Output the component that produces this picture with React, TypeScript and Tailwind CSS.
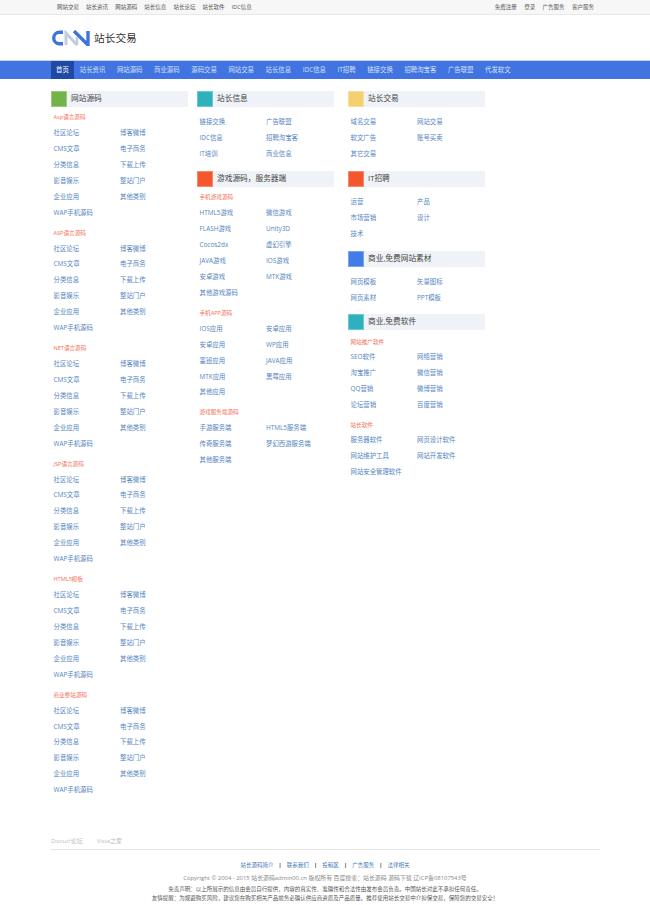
const FONT = "font-['Open_Sans','Noto_Sans_CJK_SC',sans-serif]";

const topLeft = ["网站交易", "站长资讯", "网站源码", "站长信息", "站长论坛", "站长软件", "IDC信息"];
const topRight = ["免费注册", "登录", "广告服务", "客户服务"];
const navItems = ["站长资讯", "网站源码", "商业源码", "源码交易", "网站交易", "站长信息", "IDC信息", "IT招聘", "链接交换", "招聘淘宝客", "广告联盟", "代发软文"];
const sourceLinks = ["社区论坛", "博客微博", "CMS文章", "电子商务", "分类信息", "下载上传", "影音娱乐", "整站门户", "企业应用", "其他类别", "WAP手机源码"];
const sourceGroups = ["Asp语言源码", "ASP语言源码", "NET语言源码", "JSP语言源码", "HTML5模板", "商业整站源码"];

function Links({ items, className = "" }: { items: string[]; className?: string }) {
  return (
    <div className={`grid grid-cols-[66.5px_70px] pl-[2.5px] ${className}`}>
      {items.map((t, i) => (
        <a key={i} className="h-[15.95px] leading-[17.6px] text-[6.4px] text-[#5585c0] whitespace-nowrap">
          {t}
        </a>
      ))}
    </div>
  );
}

function GroupTitle({ children, className = "" }: { children: string; className?: string }) {
  return <div className={`h-[12px] leading-[12px] pl-[2.5px] text-[5.6px] text-[#f4705a] ${className}`}>{children}</div>;
}

function Head({ color, title }: { color: string; title: string }) {
  return (
    <div className="flex h-[16px] items-center bg-[#eff2f6]">
      <span className={`h-[16px] w-[16px] border border-white/30 ${color}`} />
      <span className="ml-[4px] text-[7.7px] text-[#444]">{title}</span>
    </div>
  );
}

function Logo() {
  return (
    <svg width="39" height="16" viewBox="0 0 39 16" aria-hidden>
      <path d="M11 2.2 H7.5 A5.8 5.8 0 0 0 7.5 13.8 H11" fill="none" stroke="#3f74dc" strokeWidth="3.4" />
      <path d="M14 15 V3 L25 15" fill="none" stroke="#c2cdd9" strokeWidth="3" />
      <path d="M22 1 L36 15 V1" fill="none" stroke="#3f74dc" strokeWidth="3.4" />
      <path d="M25 15 V7" fill="none" stroke="#c2cdd9" strokeWidth="2.6" />
    </svg>
  );
}

export default function App() {
  return (
    <div className={`w-[650px] h-[905px] overflow-hidden bg-white ${FONT}`}>
      <div className="h-[15px] bg-[#f7f7f7] border-b border-[#e8e8e8]">
        <div className="flex justify-between pl-[57px] pr-[56px] text-[5.5px] leading-[14px] text-[#555]">
          <div className="flex gap-[7.1px]">
            {topLeft.map((t) => <a key={t}>{t}</a>)}
          </div>
          <div className="flex gap-[7.4px]">
            {topRight.map((t) => <a key={t}>{t}</a>)}
          </div>
        </div>
      </div>

      <div className="flex h-[45px] items-center gap-[3px] pl-[52px] pt-[1px]">
        <Logo />
        <span className="text-[10.7px] text-[#333] font-['Noto_Sans_CJK_SC',sans-serif]">站长交易</span>
      </div>

      <div className="h-[19px] bg-[#4174e0] border-t border-[#c3d0f2]">
        <div className="flex pl-[51px] text-[6.4px] leading-[18px] text-[#d5e0f8]">
          <a className="bg-[#1e4aa6] px-[5px] text-white">首页</a>
          <div className="flex gap-[11.6px] pl-[6px]">
            {navItems.map((t) => <a key={t}>{t}</a>)}
          </div>
        </div>
      </div>

      <div className="flex pl-[51px] pt-[12px] h-[757px]">
        <div className="w-[137px]">
          <Head color="bg-[#72b34a]" title="网站源码" />
          <div className="flex flex-col gap-[6.9px] pt-[4px]">
            {sourceGroups.map((g) => (
              <div key={g}>
                <GroupTitle>{g}</GroupTitle>
                <Links items={sourceLinks} className="pt-[1px]" />
              </div>
            ))}
          </div>
        </div>

        <div className="ml-[9px] w-[137px]">
          <Head color="bg-[#2fb1bd]" title="站长信息" />
          <Links className="pt-[6px]" items={["链接交换", "广告联盟", "IDC信息", "招聘淘宝客", "IT培训", "商业信息"]} />
          <div className="pt-[10px]">
            <Head color="bg-[#f4562e]" title="游戏源码，服务器端" />
          </div>
          <GroupTitle className="mt-[4px]">手机游戏源码</GroupTitle>
          <Links className="pt-[1px]" items={["HTML5游戏", "微信游戏", "FLASH游戏", "Unity3D", "Cocos2dx", "虚幻引擎", "JAVA游戏", "IOS游戏", "安卓游戏", "MTK游戏", "其他游戏源码"]} />
          <GroupTitle className="mt-[7.3px]">手机APP源码</GroupTitle>
          <Links className="pt-[1px]" items={["IOS应用", "安卓应用", "安卓应用", "WP应用", "塞班应用", "JAVA应用", "MTK应用", "黑莓应用", "其他应用"]} />
          <GroupTitle className="mt-[6.25px]">游戏服务端源码</GroupTitle>
          <Links className="pt-[1px]" items={["手游服务端", "HTML5服务端", "传奇服务端", "梦幻西游服务端", "其他服务端"]} />
        </div>

        <div className="ml-[14px] w-[137px]">
          <Head color="bg-[#f4d06f]" title="站长交易" />
          <Links className="pt-[6px]" items={["域名交易", "网站交易", "软文广告", "账号买卖", "其它交易"]} />
          <div className="pt-[10px]">
            <Head color="bg-[#f4562e]" title="IT招聘" />
          </div>
          <Links className="pt-[6.5px]" items={["运营", "产品", "市场营销", "设计", "技术"]} />
          <div className="pt-[10px]">
            <Head color="bg-[#427ce9]" title="商业,免费网站素材" />
          </div>
          <Links className="pt-[6px]" items={["网页模板", "矢量图标", "网页素材", "PPT模板"]} />
          <div className="pt-[9px]">
            <Head color="bg-[#2fb1bd]" title="商业,免费软件" />
          </div>
          <GroupTitle className="mt-[6px]">网站推广软件</GroupTitle>
          <Links items={["SEO软件", "网络营销", "淘宝推广", "微信营销", "QQ营销", "微博营销", "论坛营销", "百度营销"]} />
          <GroupTitle className="mt-[7px]">站长软件</GroupTitle>
          <Links items={["服务器软件", "网页设计软件", "网站维护工具", "网站开发软件", "网站安全管理软件"]} />
        </div>
      </div>

      <div className="ml-[51px] mr-[50px] flex h-[14px] items-center gap-[14px] border-b border-[#e8e8e8] pb-[3px] text-[6px] text-[#bbb]">
        <a>Discuz!论坛</a>
        <a>Vista之家</a>
      </div>

      <div className="flex flex-col items-center pt-[8.5px] text-[5.5px] text-[#555]">
        <div className="flex h-[13px] items-center gap-[5.2px] text-[#3f78b5]">
          <a>站长源码简介</a><b className="text-[#333]">|</b>
          <a>联系我们</a><b className="text-[#333]">|</b>
          <a>投稿区</a><b className="text-[#333]">|</b>
          <a>广告服务</a><b className="text-[#333]">|</b>
          <a>法律相关</a>
        </div>
        <div className="h-[13px] leading-[13px] text-[5.9px] text-[#888] whitespace-nowrap">
          Copyright © 2004 - 2015 站长源码admin00.cn 版权所有 百度搜索：站长源码 源码下载 辽ICP备08107543号
        </div>
        <div className="h-[9px] leading-[9px] text-center whitespace-nowrap">
          免责声明：以上所展示的信息由会员自行提供，内容的真实性、准确性和合法性由发布会员负责。中国站长对此不承担任何责任。
        </div>
        <div className="h-[9px] leading-[9px] text-center whitespace-nowrap">
          友情提醒：为规避购买风险，建议您在购买相关产品前务必确认供应商资质及产品质量。推荐使用站长交易中介担保交易，保障您的交易安全！
        </div>
      </div>
    </div>
  );
}
